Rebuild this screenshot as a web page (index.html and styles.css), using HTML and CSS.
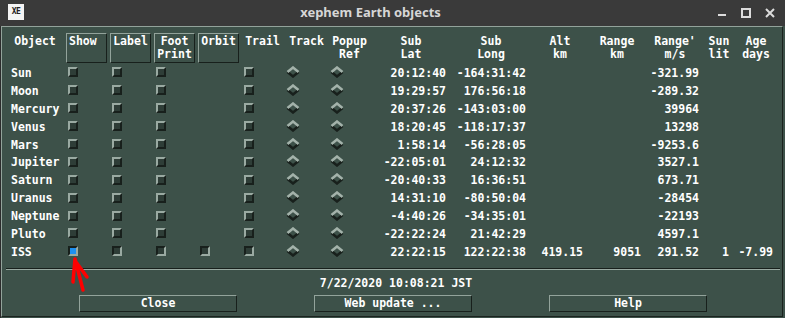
FILE: index.html
```html
<!DOCTYPE html>
<html lang="en">
<head>
    <meta charset="UTF-8">
    <title>xephem Earth objects</title>
    <link rel="stylesheet" href="styles.css">
</head>
<body>
    <div class="titlebar">
        <div class="app-icon">XE</div>
        <div class="title">xephem Earth objects</div>
        <div class="wm-buttons">
            <svg width="10" height="10" viewBox="0 0 10 10"><rect x="1" y="6" width="8" height="2" fill="#dcdcdc"/></svg>
            <svg width="10" height="10" viewBox="0 0 10 10"><rect x="1" y="1" width="8" height="8" fill="none" stroke="#dcdcdc" stroke-width="2"/></svg>
            <svg width="10" height="10" viewBox="0 0 10 10"><path d="M1 1 L9 9 M9 1 L1 9" stroke="#dcdcdc" stroke-width="2"/></svg>
        </div>
    </div>

    <div class="window">
        <div class="pane">
            <div class="grid header">
                <div class="hd pad-obj">Object</div>
                <div class="hbox left">Show</div>
                <div class="hbox">Label</div>
                <div class="hbox">Foot<br>Print</div>
                <div class="hbox">Orbit</div>
                <div class="hd pad-trail">Trail</div>
                <div class="hd pad-track">Track</div>
                <div class="hd pad-popup">Popup<br>Ref</div>
                <div class="hd">Sub<br>Lat</div>
                <div class="hd">Sub<br>Long</div>
                <div class="hd">Alt<br>km</div>
                <div class="hd">Range<br>km</div>
                <div class="hd">Range'<br>m/s</div>
                <div class="hd">Sun<br>lit</div>
                <div class="hd">Age<br>days</div>
            </div>
            <div id="rows"></div>

            <div class="separator"></div>
            <div class="datetime">7/22/2020 10:08:21 JST</div>
            <div class="buttons">
                <button>Close</button>
                <button>Web update ...</button>
                <button>Help</button>
            </div>
        </div>
    </div>

    <!-- annotation arrow -->
    <svg class="arrow" width="785" height="318" viewBox="0 0 785 318">
        <path d="M75 259 L73 282 M75 259 L83 290 M76 262 L87 277" stroke="#f00" stroke-width="3.5" stroke-linecap="round" fill="none"/>
    </svg>

    <script>
        const objects = [
            ['Sun', '20:12:40', '-164:31:42', '', '', '-321.99', '', ''],
            ['Moon', '19:29:57', '176:56:18', '', '', '-289.32', '', ''],
            ['Mercury', '20:37:26', '-143:03:00', '', '', '39964', '', ''],
            ['Venus', '18:20:45', '-118:17:37', '', '', '13298', '', ''],
            ['Mars', '1:58:14', '-56:28:05', '', '', '-9253.6', '', ''],
            ['Jupiter', '-22:05:01', '24:12:32', '', '', '3527.1', '', ''],
            ['Saturn', '-20:40:33', '16:36:51', '', '', '673.71', '', ''],
            ['Uranus', '14:31:10', '-80:50:04', '', '', '-28454', '', ''],
            ['Neptune', '-4:40:26', '-34:35:01', '', '', '-22193', '', ''],
            ['Pluto', '-22:22:24', '21:42:29', '', '', '4597.1', '', ''],
            ['ISS', '22:22:15', '122:22:38', '419.15', '9051', '291.52', '1', '-7.99']
        ];
        const diamond = '<svg class="diamond" width="14" height="12" viewBox="0 0 14 12">' +
            '<polyline points="1.5,6 7,10.5 12.5,6" fill="none" stroke="#18201c" stroke-width="2.5"/>' +
            '<polyline points="1.5,6 7,1.5 12.5,6" fill="none" stroke="#a3b2aa" stroke-width="2.5"/></svg>';

        const rows = document.getElementById('rows');
        objects.forEach(o => {
            const iss = o[0] === 'ISS';
            const cb = iss ? '<div class="cb in"></div>' : '<div class="cb"></div>';
            rows.innerHTML += `
                <div class="grid row">
                    <div class="name">${o[0]}</div>
                    <div>${iss ? '<div class="cb on"></div>' : cb}</div>
                    <div>${cb}</div>
                    <div>${cb}</div>
                    <div>${iss ? cb : ''}</div>
                    <div>${cb}</div>
                    <div>${diamond}</div>
                    <div>${diamond}</div>
                    <div class="num pr-lat">${o[1]}</div>
                    <div class="num pr-long">${o[2]}</div>
                    <div class="num pr-alt">${o[3]}</div>
                    <div class="num pr-range">${o[4]}</div>
                    <div class="num pr-rate">${o[5]}</div>
                    <div class="num pr-sun">${o[6]}</div>
                    <div class="num pr-age">${o[7]}</div>
                </div>`;
        });
    </script>
</body>
</html>
```

FILE: styles.css
```css
/* Page and window frame */
body {
    margin: 0;
    width: 785px;
    height: 318px;
    overflow: hidden;
    background-color: #3a3a3a;
    font-family: "DejaVu Sans Mono", "Liberation Mono", monospace;
    font-weight: bold;
    font-size: 11.5px;
    color: #ffffff;
    position: relative;
}

.titlebar {
    height: 26px;
    display: flex;
    align-items: center;
    background-color: #3a3a3a;
}

.app-icon {
    width: 16px;
    height: 16px;
    margin-left: 8px;
    margin-top: -3px;
    background-color: #f4f4f4;
    color: #222;
    font-size: 8px;
    line-height: 16px;
    text-align: center;
    letter-spacing: -0.5px;
}

.title {
    flex: 1;
    text-align: center;
    font-family: "Noto Sans", "DejaVu Sans", sans-serif;
    font-weight: bold;
    font-size: 13px;
    color: #d6d6d6;
    margin-top: -2px;
}

.wm-buttons {
    display: flex;
    gap: 14px;
    margin-right: 10px;
    margin-top: -1px;
}

.window {
    height: 292px;
    background-color: #3d5149;
    border-left: 1px solid #2b2b2b;
    box-sizing: border-box;
}

.pane {
    height: 291px;
    width: 782px;
    box-sizing: border-box;
    border-top: 1px solid #93a39b;
    border-left: 1px solid #93a39b;
    border-right: 1px solid #1b231f;
    border-bottom: 1px solid #1b231f;
    padding: 6px 0 0 6px;
}

/* Table layout */
.grid {
    display: grid;
    grid-template-columns: 58px 44px 44px 44px 44px 44px 44px 46px 70px 90px 48px 66px 50px 38px 36px;
}

.header {
    height: 30px;
    margin-bottom: 1px;
    line-height: 13px;
}

.hd {
    padding-top: 2px;
    text-align: center;
    white-space: nowrap;
}

.pad-obj { padding-right: 4px; }
.pad-trail { padding-right: 3px; }
.pad-track { padding-right: 3px; }
.pad-popup { padding-right: 7px; }

.hbox {
    width: 41px;
    height: 30px;
    box-sizing: border-box;
    border: 1px solid;
    border-color: #93a39b #18201c #18201c #93a39b;
    padding-top: 1px;
    text-align: center;
}

.hbox.left {
    text-align: left;
    padding-left: 2px;
}

.row {
    height: 17.9px;
    align-items: center;
}

.row > div {
    display: flex;
    align-items: center;
    white-space: nowrap;
}

.name {
    padding-left: 3px;
}

.num {
    justify-content: flex-end;
}

.pr-lat { padding-right: 0; }
.pr-long { padding-right: 10px; }
.pr-alt { padding-right: 1px; }
.pr-range { padding-right: 9px; }
.pr-rate { padding-right: 1px; }
.pr-sun { padding-right: 9px; }
.pr-age { padding-right: 1px; }

/* Toggle and radio indicators */
.cb {
    width: 10px;
    height: 10px;
    margin-left: 2px;
    margin-top: -1px;
    box-sizing: border-box;
    border: 2px solid;
    border-color: #9aaaa2 #18201c #18201c #9aaaa2;
    background-color: #2e3d37;
}

.cb.in {
    border-color: #18201c #9aaaa2 #9aaaa2 #18201c;
    background-color: #2e3d37;
}

.cb.on {
    border-color: #18201c #9aaaa2 #9aaaa2 #18201c;
    background-color: #1e90f0;
}

.diamond {
    margin-left: 0;
    margin-top: -2px;
}

/* Footer */
.separator {
    margin: 7px 2px 0 -2px;
    border-top: 1px solid #18201c;
    border-bottom: 1px solid #9aaaa2;
}

.datetime {
    margin-top: 6px;
    line-height: 14px;
    text-align: center;
    padding-left: 2px;
}

.buttons {
    display: flex;
    gap: 77px;
    margin-top: 5px;
    padding-left: 71px;
}

button {
    width: 158px;
    height: 17px;
    padding: 0;
    font: inherit;
    color: #ffffff;
    background-color: #3d5149;
    border: 1px solid;
    border-color: #93a39b #18201c #18201c #93a39b;
}

.arrow {
    position: absolute;
    top: 0;
    left: 0;
    pointer-events: none;
}
```
